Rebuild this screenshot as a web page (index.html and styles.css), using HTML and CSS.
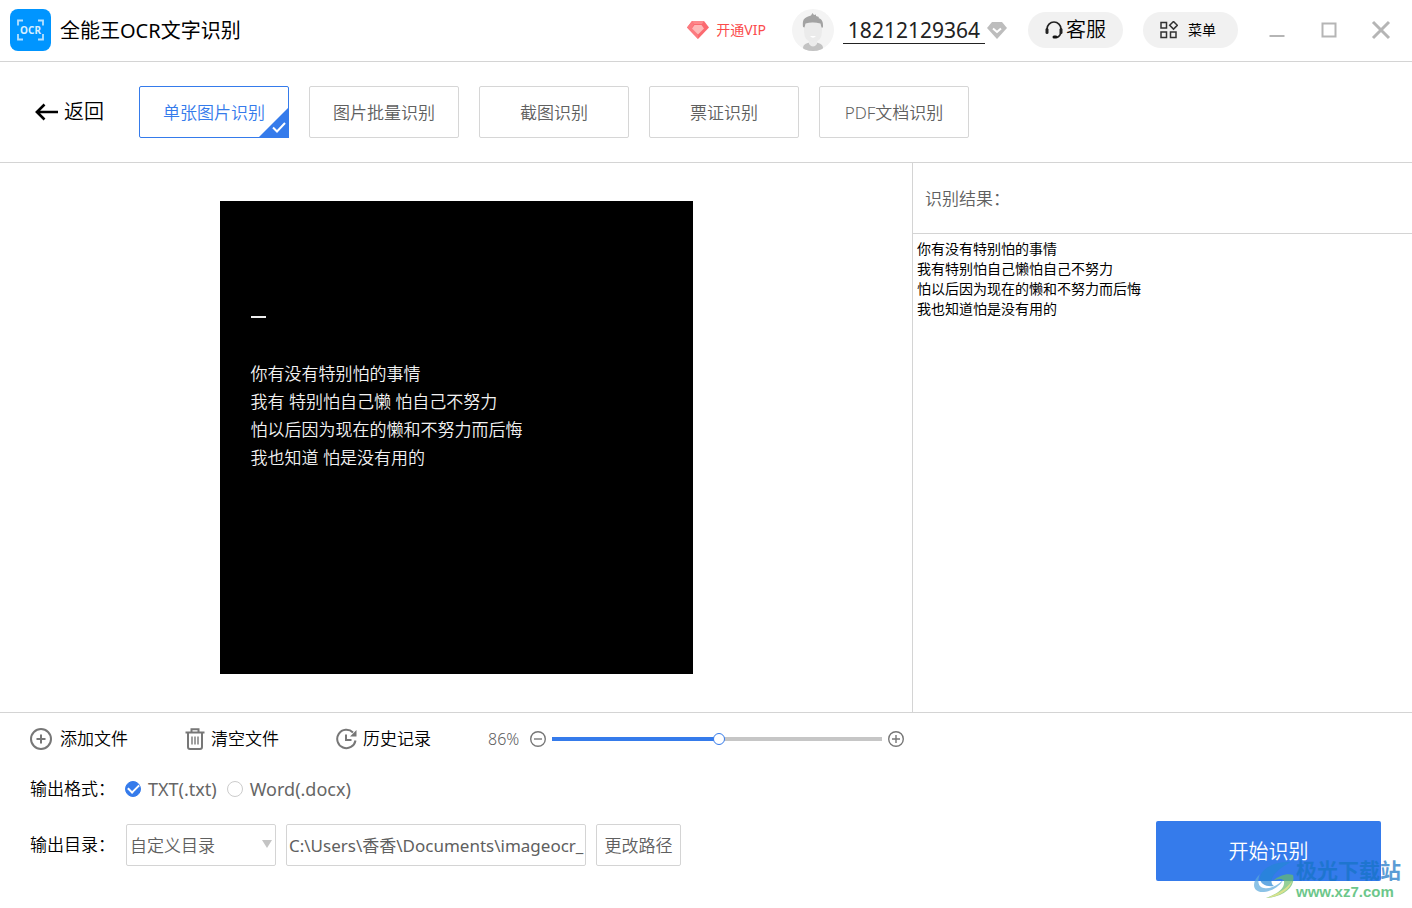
FILE: index.html
```html
<!DOCTYPE html>
<html lang="zh-CN">
<head>
<meta charset="utf-8">
<title>全能王OCR文字识别</title>
<link rel="stylesheet" href="styles.css">
</head>
<body>
<header class="topbar">
  <svg class="logo" viewBox="0 0 41 42" aria-hidden="true">
    <rect width="41" height="42" rx="8" fill="#0095ff"/>
    <path d="M8 16.500v-5h5M28 11.500h5v5M8 25v5.500h5M28 30.500h5V25" fill="none" stroke="#b5e0ff" stroke-width="1.800"/>
    <text x="20.500" y="25" text-anchor="middle" class="logo-text">OCR</text>
  </svg>
  <h1 class="title">全能王OCR文字识别</h1>
  <a class="vip" href="#">
    <svg width="22" height="18" viewBox="0 0 22 18" aria-hidden="true">
      <path d="M5 0h12l5 6.500L11 18 0 6.500z" fill="#fb6a70"/>
      <path d="M5 0h12l-2 3H7z" fill="#fd8a8c"/>
      <path d="M0 6.500L5 0l2 3-2 4 6 7v4z" fill="#fc7b80"/>
      <path d="M7.500 4h7l2.500 3.500L11 13.500 5 7.500z" fill="#fdb9b8"/>
    </svg>
    开通VIP
  </a>
  <svg class="avatar" viewBox="0 0 42 42" aria-hidden="true">
    <defs><clipPath id="face"><circle cx="21" cy="21" r="21"/></clipPath></defs>
    <g clip-path="url(#face)">
      <rect width="42" height="42" fill="#f4f4f4"/>
      <path d="M11 39c0-4 4-5 7-5.500h6c3 .5 7 1.500 7 5.500v3H11z" fill="#c3c3c3"/>
      <path d="M17 29h8v6q-4 5-8 0z" fill="#ececec"/>
      <path d="M12 14h18v8q0 11-9 11t-9-11z" fill="#ebebeb"/>
      <path d="M18 27h6q-3 3.500-6 0z" fill="#fff"/>
      <path d="M11 18c-.5-5 0-8 3-9.500l2-1 3-1 1.500-2.500 1.500 2 2-.5v1.500l3 1-.5 1c3 1 5 3 4.500 9.500h-1.500l-1-4q-8-2-15 0l-1 4z" fill="#a3a3a3"/>
    </g>
  </svg>
  <button class="account" type="button"><span class="phone">18212129364</span>
    <svg width="20" height="17" viewBox="0 0 20 17" aria-hidden="true">
      <path d="M5 0h10l5 6-10 11L0 6z" fill="#bdbdbd"/>
      <path d="M6 6.500l4 3.500 4-3.500" fill="none" stroke="#fff" stroke-width="2"/>
    </svg>
  </button>
  <button class="pill pill-service" type="button">
    <svg width="18" height="20" viewBox="0 0 18 20" aria-hidden="true">
      <path d="M2 12V9a7 7 0 0 1 14 0v3q-.5 4-4 5.500" fill="none" stroke="#222" stroke-width="1.700"/>
      <rect x="0.500" y="8" width="3" height="6" rx="1.500" fill="#222"/>
      <rect x="14.500" y="8" width="3" height="6" rx="1.500" fill="#222"/>
      <rect x="7.500" y="15.500" width="5" height="3" rx="1.500" fill="#111"/>
    </svg>
    客服
  </button>
  <button class="pill pill-menu" type="button">
    <svg width="18" height="18" viewBox="0 0 18 18" fill="none" stroke="#333" stroke-width="1.500" aria-hidden="true">
      <rect x="1" y="1.500" width="5.500" height="5.500"/><path d="M13.500 0.500l3.800 3.800-3.800 3.800-3.800-3.800z"/>
      <rect x="1" y="11" width="5.500" height="5.500"/><rect x="10.500" y="11" width="5.500" height="5.500"/>
    </svg>
    菜单
  </button>
  <div class="window-buttons">
    <button type="button" aria-label="最小化"><svg viewBox="0 0 20 20"><path d="M2.500 16h15"/></svg></button>
    <button type="button" aria-label="最大化"><svg viewBox="0 0 20 20"><rect x="3.500" y="3.500" width="13" height="13"/></svg></button>
    <button type="button" aria-label="关闭"><svg viewBox="0 0 20 20"><path class="cross" d="M2 2l16 16M18 2L2 18"/></svg></button>
  </div>
</header>

<nav class="modes">
  <button class="back" type="button">
    <svg width="24" height="18" viewBox="0 0 24 18" fill="none" stroke="#000" stroke-width="2.600" aria-hidden="true"><path d="M1.500 9H23M9.500 1.500L1.900 9l7.600 7.500"/></svg>
    返回
  </button>
  <button class="mode mode-active" type="button">单张图片识别
    <svg class="corner" width="31" height="31" viewBox="0 0 31 31" aria-hidden="true"><path d="M31 0v31H0z" fill="#357beb"/><path d="M15 20.500l4 4 8-8.500" fill="none" stroke="#fff" stroke-width="2"/></svg>
  </button>
  <button class="mode" type="button">图片批量识别</button>
  <button class="mode" type="button">截图识别</button>
  <button class="mode" type="button">票证识别</button>
  <button class="mode" type="button">PDF文档识别</button>
</nav>

<main class="workspace">
  <section class="preview">
    <div class="picture">
      <p class="dash"></p>
      <p>你有没有特别怕的事情</p>
      <p>我有 特别怕自己懒 怕自己不努力</p>
      <p>怕以后因为现在的懒和不努力而后悔</p>
      <p>我也知道 怕是没有用的</p>
    </div>
  </section>
  <section class="result">
    <label class="result-title" for="result">识别结果：</label>
    <textarea class="result-text" id="result" spellcheck="false">你有没有特别怕的事情
我有特别怕自己懒怕自己不努力
怕以后因为现在的懒和不努力而后悔
我也知道怕是没有用的</textarea>
  </section>
</main>

<footer class="controls">
  <div class="options">
    <div class="tools">
      <button class="tool tool-add" type="button">
        <svg width="22" height="22" viewBox="0 0 22 22" fill="none" stroke="#777" aria-hidden="true"><circle cx="11" cy="11" r="10" stroke-width="2"/><path d="M11 6.500v9M6.500 11h9" stroke-width="2"/></svg>
        添加文件
      </button>
      <button class="tool" type="button">
        <svg width="20" height="22" viewBox="0 0 20 22" fill="none" stroke="#777" stroke-width="2" aria-hidden="true"><path d="M0.500 4.500h19M6.500 4V1.200h7V4M3 4.500V19q0 2 2 2h10q2 0 2-2V4.500"/><path d="M7 8.500v8M10 8.500v8M13 8.500v8" stroke-width="1.400"/></svg>
        清空文件
      </button>
      <button class="tool" type="button">
        <svg width="21" height="22" viewBox="0 0 21 22" fill="none" stroke="#777" stroke-width="2" aria-hidden="true"><path d="M17 4.500A9.200 9.200 0 1 0 19.500 12.500"/><path d="M10 6.500v5.500h5.500"/><path d="M20.500 2v6.500H14z" fill="#777" stroke="none"/></svg>
        历史记录
      </button>
      <div class="zoom">
        <label class="zoom-value" for="zoom">86%</label>
        <button class="zoom-step" type="button" aria-label="缩小"><svg width="16" height="16" viewBox="0 0 16 16"><circle cx="8" cy="8" r="7.300"/><path d="M4 8h8"/></svg></button>
        <input class="slider" id="zoom" type="range" min="0" max="170" value="86">
        <button class="zoom-step" type="button" aria-label="放大"><svg width="16" height="16" viewBox="0 0 16 16"><circle cx="8" cy="8" r="7.300"/><path d="M4 8h8M8 4v8"/></svg></button>
      </div>
    </div>
    <div class="formats">
      <span class="field-label">输出格式：</span>
      <label class="format"><input type="radio" name="format" checked>TXT(.txt)</label>
      <label class="format"><input type="radio" name="format">Word(.docx)</label>
    </div>
    <div class="folder">
      <label class="field-label" for="folder">输出目录：</label>
      <span class="select-box">
        <select id="folder"><option>自定义目录</option></select>
        <svg class="arrow" width="10" height="8" viewBox="0 0 10 8" aria-hidden="true"><path d="M0 0h10L5 8z" fill="#c4c4c4"/></svg>
      </span>
      <input class="path" type="text" aria-label="路径" value="C:\Users\香香\Documents\imageocr_" spellcheck="false">
      <button class="change" type="button">更改路径</button>
    </div>
  </div>
  <button class="start" type="button">开始识别</button>
  <div class="watermark">
    <svg width="42" height="38" viewBox="0 0 42 38" aria-hidden="true">
      <path d="M38 1C22 0 8 7 7 17c0 6 6 9 14 8-5-3-4-13 17-24z" fill="#2587d6"/>
      <path d="M7 13C-2 21-1 32 11 31c9-1 17-7 19-12-7 7-14 9-19 8-6-1-7-7-4-14z" fill="#5ba9dc"/>
      <path d="M40 14c3 11-8 22-27 23 14-5 19-11 18-17-2-3-7-2-11 0 6-6 15-8 20-6z" fill="#69bd6c"/>
      <path d="M39 20c-2 9-13 16-26 17 11-4 21-9 26-17z" fill="#c9d65c"/>
    </svg>
    <div>
      <div class="watermark-name">极光下载站</div>
      <div class="watermark-site">www.xz7.com</div>
    </div>
  </div>
</footer>
</body>
</html>
```
FILE: styles.css
```css
* { box-sizing: border-box; }

body {
  margin: 0;
  min-height: 100vh;
  display: flex;
  flex-direction: column;
  background: #fff;
  color: #000;
  font-family: "Noto Sans", "Noto Sans CJK SC", sans-serif;
  font-size: 17px;
  font-weight: 350;
  line-height: 24px;
}

button, input, select, textarea { font: inherit; color: inherit; }
button { margin: 0; padding: 0; border: 0; background: none; white-space: nowrap; }
svg { display: block; flex: none; }
h1, p { margin: 0; }

.topbar {
  display: flex;
  align-items: center;
  height: 62px;
  padding: 0 21px 1px 10px;
  border-bottom: 1px solid #d4d4d4;
}
.logo { width: 41px; height: 42px; }
.logo-text { font: 700 10px "Noto Sans", sans-serif; fill: #d8efff; }
.title { margin: 0 auto 0 9px; padding-top: 1px; font-size: 20px; font-weight: 400; white-space: nowrap; }
.vip {
  display: flex;
  align-items: center;
  gap: 7px;
  margin-right: 26px;
  color: #fb4b4b;
  font-size: 14px;
  font-weight: 400;
  text-decoration: none;
}
.avatar { width: 42px; height: 42px; margin-right: 9px; }
.account { display: flex; align-items: center; gap: 2px; margin-right: 21px; }
.phone { padding: 0 5px; border-bottom: 1px solid #222; color: #222; font-size: 21px; font-weight: 400; line-height: 26px; }
.pill {
  display: flex;
  align-items: center;
  justify-content: center;
  width: 95px;
  height: 36px;
  border-radius: 18px;
  background: #f1f1f1;
}
.pill-service { gap: 3px; font-size: 20px; }
.pill-menu { gap: 10px; margin-left: 20px; padding-right: 5px; font-size: 14px; font-weight: 400; }
.window-buttons { display: flex; gap: 32px; margin-left: 29px; }
.window-buttons svg { width: 20px; height: 20px; fill: none; stroke: #b5b5b5; stroke-width: 2; }
.window-buttons .cross { stroke-width: 3; }

.modes {
  display: flex;
  align-items: center;
  gap: 20px;
  padding: 24px 35px;
  border-bottom: 1px solid #d4d4d4;
}
.back { display: flex; align-items: center; gap: 5px; margin-right: 15px; font-size: 20px; }
.mode {
  position: relative;
  width: 150px;
  height: 52px;
  padding-top: 2px;
  border: 1px solid #d6d6d6;
  border-radius: 2px;
  color: #606060;
}
.mode-active { border-color: #357beb; color: #357beb; }
.corner { position: absolute; right: -1px; bottom: -1px; }

.workspace { flex: 1; display: grid; grid-template-columns: minmax(0, 1fr) 500px; }
.preview { display: grid; place-items: center; }
.picture {
  width: 473px;
  height: 473px;
  padding: 115px 31px;
  background: #000;
  color: #f2f2f2;
  line-height: 28px;
}
.dash { width: 15px; height: 2px; margin-bottom: 42px; background: #eee; }
.result { display: flex; flex-direction: column; border-left: 1px solid #d4d4d4; }
.result-title { padding: 24px 12px 22px; border-bottom: 1px solid #d4d4d4; color: #606060; }
.result-text {
  flex: 1;
  padding: 5px 4px;
  border: 0;
  outline: 0;
  resize: none;
  font-size: 14px;
  font-weight: 400;
  line-height: 20px;
}

.controls {
  position: relative;
  display: flex;
  align-items: flex-end;
  justify-content: space-between;
  padding: 14px 31px 27px 30px;
  border-top: 1px solid #d4d4d4;
}
.options { padding-bottom: 15px; }
.tools { display: flex; align-items: center; gap: 57px; }
.tool { display: flex; align-items: center; gap: 6px; }
.tool-add { gap: 8px; }
.zoom { display: flex; align-items: center; gap: 6px; color: #606060; }
.zoom-value { width: 36px; font-size: 16px; }
.zoom-step svg { fill: none; stroke: #777; stroke-width: 1.4; }
.slider { appearance: none; width: 330px; height: 12px; margin: 0; background: none; }
.slider::-webkit-slider-runnable-track {
  height: 4px;
  background: linear-gradient(to right, #357beb 50%, #c6c6c6 50%);
}
.slider::-webkit-slider-thumb {
  appearance: none;
  width: 12px;
  height: 12px;
  margin-top: -4px;
  border: 1px solid #357beb;
  border-radius: 50%;
  background: #fff;
}

.formats { display: flex; align-items: center; margin-top: 26px; }
.field-label { width: 95px; }
.format { display: flex; align-items: center; gap: 7px; margin-right: 10px; color: #666; font-size: 18px; font-weight: 400; }
.format input {
  appearance: none;
  display: grid;
  place-items: center;
  width: 16px;
  height: 16px;
  margin: 0;
  border: 1px solid #ccc;
  border-radius: 50%;
}
.format input:checked { border-color: #357beb; background: #357beb; }
.format input:checked::before {
  content: "";
  width: 9px;
  height: 5px;
  margin-bottom: 3px;
  border: solid #fff;
  border-width: 0 0 2px 2px;
  transform: rotate(-45deg);
}

.folder { display: flex; align-items: center; margin-top: 23px; }
.folder .field-label { width: 96px; }
.select-box { position: relative; margin-right: 10px; }
.select-box select, .path, .change {
  display: block;
  height: 42px;
  border: 1px solid #d4d4d4;
  border-radius: 2px;
  background: #fff;
  color: #606060;
}
.select-box select { appearance: none; width: 150px; padding: 2px 3px 0; }
.arrow { position: absolute; top: 16px; right: 4px; }
.path { width: 300px; margin-right: 10px; padding: 0 0 2px 2px; font-weight: 400; }
.change { width: 85px; padding-top: 2px; }

.start {
  width: 225px;
  height: 60px;
  padding-top: 2px;
  border-radius: 2px;
  background: #357beb;
  color: #fff;
  font-size: 20px;
}
.watermark {
  position: absolute;
  right: 11px;
  bottom: 6px;
  display: flex;
  align-items: center;
  gap: 1px;
  opacity: 0.7;
  pointer-events: none;
}
.watermark-name { color: #1573c4; font-size: 21px; font-weight: 700; line-height: 24px; }
.watermark-site { color: #2fb05a; font: 700 15px/20px "Liberation Sans", sans-serif; }
```
